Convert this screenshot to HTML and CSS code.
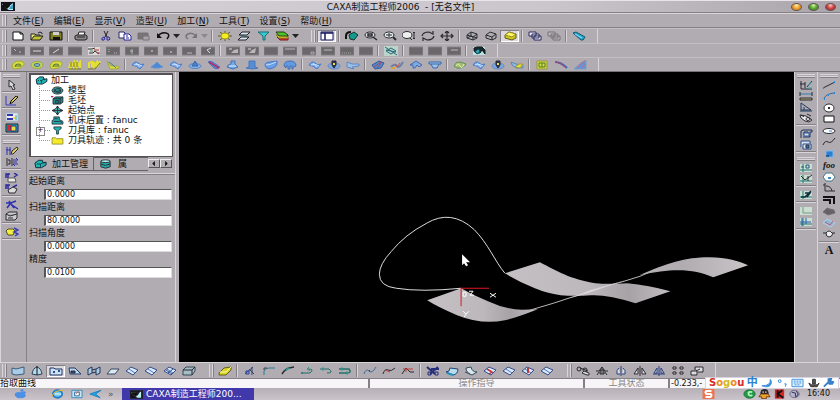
FILE: index.html
```html
<!DOCTYPE html>
<html lang="zh-CN">
<head>
<meta charset="utf-8">
<title>CAXA制造工程师2006</title>
<link rel="stylesheet" href="styles.css">
</head>
<body>
<svg class="defs" aria-hidden="true">
  <symbol id="box" viewBox="0 0 14 10"><path d="M0 1h14v8H0z" fill="#6b686b" stroke="#838083"/></symbol>
  <symbol id="surf" viewBox="0 0 14 10"><path d="M1 5Q4 0 7 3T13 4L9 9Q6 6 1 5z" fill="#76a5e8" stroke="#4a7dca"/><path d="M3 5q4-2 8 1M5 3q2 3 4 4" stroke="#c7e0ff"/></symbol>
  <symbol id="mill" viewBox="0 0 14 10"><path d="M1 6Q2 1 8 1t5 4Q10 9 4 9 1 9 1 6z" fill="#d4dc42" stroke="#a3a83a"/><path d="M4 7q0-3 3-3t3 2M5 6h5" stroke="#59752e"/></symbol>
  <symbol id="sheet" viewBox="0 0 14 10"><path d="M1 5L6 1l7 3-5 5z" fill="#d8e9fb" stroke="#384c83"/><path d="M4 3l6 4" stroke="#4d75ba"/></symbol>
  <symbol id="part" viewBox="0 0 14 10"><path d="M1 4l4-3h4l1 3 3-1v3L8 9H2z" fill="#1fb5b5" stroke="#123"/><path d="M3 5h4v3M7 5l4-2" stroke="#0c4545"/></symbol>
  <symbol id="down" viewBox="0 0 7 10"><path d="M0 3h7L3.500 7z" fill="currentColor" stroke="none"/></symbol>
  <symbol id="axes" viewBox="0 0 14 10"><path d="M1 1h12v8H1z" fill="#c9dfcf" stroke="none"/><path d="M4 1v8M1 7h12" stroke="#247579"/></symbol>
</svg>
<header class="title"><svg class="logo" viewBox="0 0 14 9"><path d="M0 0h14v9H0z" fill="#10131b"/><path d="M1 2h5l1 3 5-4v7H8L6 7z" fill="#b9edf3"/><path d="M2 2h7v2L6 7 2 4z" fill="#111"/><path d="M9 5l3-3v5H8z" fill="#33a3c7"/></svg><h1>CAXA制造工程师2006&nbsp; - [无名文件]</h1>
  <div class="winbtns"><button class="min" aria-label="最小化"></button><button class="max" aria-label="最大化"></button><button class="close" aria-label="关闭"></button></div>
</header>
<nav class="menu"><i class="grip"></i><button>文件(<u>E</u>)</button><button>编辑(<u>E</u>)</button><button>显示(<u>V</u>)</button><button>造型(<u>U</u>)</button><button>加工(<u>N</u>)</button><button>工具(<u>T</u>)</button><button>设置(<u>S</u>)</button><button>帮助(<u>H</u>)</button></nav>

<div class="bar" role="toolbar" aria-label="标准">
  <i class="grip"></i>
  <button aria-label="新建"><svg viewBox="0 0 14 10"><path d="M2 1h7l3 2v6H2z" fill="#fff" stroke="#111"/><path d="M9 1v2h3" stroke="#111"/></svg></button>
  <button aria-label="打开"><svg viewBox="0 0 14 10"><path d="M1 9V3h4l1 1h4v1" fill="#f0ef7b" stroke="#222"/><path d="M1 9l3-4h9l-3 4z" fill="#c4c238" stroke="#222"/><path d="M8 2q2-2 4 0v1" stroke="#222"/></svg></button>
  <button aria-label="保存"><svg viewBox="0 0 14 10"><path d="M1 1h12v8H1z" fill="#828026" stroke="#111"/><path d="M4 1h6v3H4z" fill="#d3cfd1" stroke="none"/><path d="M4 6h7v3H4z" fill="#111" stroke="none"/></svg></button>
  <i class="sep"></i>
  <button aria-label="打印"><svg viewBox="0 0 14 10"><path d="M4 4l1-3h6l-1 3" fill="#fff" stroke="#222"/><path d="M1 5l2-1h9l1 1v3l-2 1H3L1 8z" fill="#8f8a8e" stroke="#222"/><path d="M3 6h8" stroke="#222"/></svg></button>
  <i class="sep"></i>
  <button aria-label="剪切"><svg viewBox="0 0 14 10"><path d="M5 0l3 6M9 0L6 6" stroke="#222"/><path d="M3 7l2-1 1 1-1 2H3zM8 6l2 0 1 2-1 1H8z" stroke="#2b2b9d"/></svg></button>
  <button aria-label="复制"><svg viewBox="0 0 14 10"><path d="M1 1h5l1 1v5H1z" fill="#fff" stroke="#24246e"/><path d="M6 3h5l2 2v4H6z" fill="#fff" stroke="#24249a"/><path d="M8 5h2M8 7h3" stroke="#24249a"/></svg></button>
  <button aria-label="粘贴" disabled><svg viewBox="0 0 14 10"><path d="M1 2h10v6H1z" fill="#777377" stroke="#777377"/><path d="M6 5h6v4H6z" fill="#aaa5aa" stroke="#777377"/></svg></button>
  <button aria-label="撤消"><svg viewBox="0 0 14 10"><path d="M2 5q3-4 8-3t1 6" stroke="#111" stroke-width="1.500"/><path d="M1 2v5h5z" fill="#111" stroke="none"/></svg></button>
  <button class="drop" aria-label="撤消列表"><svg><use href="#down"/></svg></button>
  <button aria-label="重做" disabled><svg viewBox="0 0 14 10"><path d="M12 5Q8 1 4 3T4 8" stroke="#777377" stroke-width="1.500"/><path d="M13 2v5H8z" fill="#777377" stroke="none"/></svg></button>
  <button class="drop off" aria-label="重做列表" disabled><svg><use href="#down"/></svg></button>
  <i class="sep"></i>
  <button aria-label="光源"><svg viewBox="0 0 14 10"><path d="M0 5h14M7 0v10M2 1l10 8M12 1L2 9" stroke="#605a20"/><ellipse cx="7" cy="5" rx="4" ry="3" fill="#f5ed22" stroke="#a59c16"/></svg></button>
  <button aria-label="图层"><svg viewBox="0 0 14 10"><path d="M5 1h8l-3 3H2zM4 6h8l-3 3H1z" fill="#d9e5f0" stroke="#222"/><path d="M3 4l8 2" stroke="#356"/></svg></button>
  <button aria-label="过滤"><svg viewBox="0 0 14 10"><path d="M2 1h11L9 5v4H7V5z" fill="#38cbd0" stroke="#176d77"/></svg></button>
  <button aria-label="颜色"><svg viewBox="0 0 14 10"><path d="M2 6l3 3h8V6z" fill="#d23434" stroke="#7d1d1d"/><path d="M1 4l3 3h9V5z" fill="#e7df31" stroke="#88801c"/><path d="M1 1h8l4 3v1H4z" fill="#4fc22d" stroke="#243d14"/></svg></button>
  <button class="drop" aria-label="颜色列表"><svg><use href="#down"/></svg></button>
  <i class="gap"></i><i class="grip"></i>
  <button class="on" aria-label="特征树"><svg viewBox="0 0 14 10"><path d="M1 1h12v8H1z" fill="#fff" stroke="#171761"/><path d="M1 2h12M5 2v7" stroke="#171761" stroke-width="1.500"/></svg></button>
  <i class="sep"></i>
  <button aria-label="重画"><svg viewBox="0 0 14 10"><path d="M1 5q0-4 5-4M1 5v3" stroke="#111" stroke-width="2"/><path d="M4 4l5-3 4 3-4 5-4-1z" fill="#159b8d" stroke="#15332e"/></svg></button>
  <button aria-label="全屏"><svg viewBox="0 0 14 10"><ellipse cx="6" cy="4" rx="5" ry="3" fill="#dde3e5"/><path d="M4 3h4v2H4zM9 6l4 3" stroke-width="1.500"/></svg></button>
  <button aria-label="放大"><svg viewBox="0 0 14 10"><ellipse cx="6" cy="4" rx="5" ry="3" fill="#e7ecee"/><path d="M3 4h6M6 2v4"/><path d="M10 6l3 3" stroke-width="2"/></svg></button>
  <button aria-label="缩放"><svg viewBox="0 0 14 10"><ellipse cx="5" cy="4" rx="5" ry="3.500" fill="#eee"/><path d="M8 7l2 2M12 1v7M11 2l1-1 1 1M11 7l1 1 1-1"/></svg></button>
  <button aria-label="旋转"><svg viewBox="0 0 14 10"><path d="M1 5q1-4 7-4l4 2V0M13 5q-1 4-7 4L2 7v3" stroke-width="1.200"/></svg></button>
  <button aria-label="平移"><svg viewBox="0 0 14 10"><path d="M1 5h12M7 0v10M3 3L1 5l2 2M11 3l2 2-2 2M5 2l2-2 2 2M5 8l2 2 2-2" stroke-width="1.200"/></svg></button>
  <i class="sep"></i>
  <button aria-label="线架"><svg viewBox="0 0 14 10"><path d="M2 4l4-3 6 2v4L8 9 2 7zM2 4l6 2 4-3M8 6v3M6 1v4L2 7M6 5l6 2"/></svg></button>
  <button aria-label="消隐"><svg viewBox="0 0 14 10"><path d="M2 4l4-3 6 2v4L8 9 2 7zM2 4l6 2 4-3M8 6v3"/></svg></button>
  <button class="on" aria-label="真实感"><svg viewBox="0 0 14 10"><path d="M2 4l4-3 7 2v4L9 9 2 7z" fill="#d5c81c" stroke="#5d5a16"/><path d="M2 4l4-3 7 2-4 3z" fill="#fbf66a" stroke="#938c22"/></svg></button>
  <i class="sep"></i>
  <button aria-label="层叠窗口"><svg viewBox="0 0 14 10"><path d="M1 1h7v4H1zM4 3h7v4H4zM6 5h7v4H6z" fill="#eee" stroke="#292962"/></svg></button>
  <button aria-label="平铺窗口" disabled><svg viewBox="0 0 14 10"><path d="M1 1h7v4H1zM4 3h7v4H4zM6 5h7v4H6z" fill="#bbb6bb" stroke="#777377"/></svg></button>
  <i class="sep"></i>
  <button aria-label="帮助"><svg viewBox="0 0 14 10"><path d="M1 2l3-1 9 5-2 3-2 0z" fill="#24a9cf" stroke="#17546d"/><path d="M3 3l7 4" stroke="#9de1ef"/></svg></button>
  <i class="end"></i>
</div>

<div class="bar" role="toolbar" aria-label="特征">
  <i class="grip"></i>
  <button aria-label="点" disabled><svg viewBox="0 0 14 10"><use href="#box"/><path d="M3 3l2 2M8 6h2" stroke="#bbb"/></svg></button>
  <button aria-label="直线" disabled><svg viewBox="0 0 14 10"><use href="#box"/><path d="M3 5h8" stroke="#ddd"/></svg></button>
  <button aria-label="斜线" disabled><svg viewBox="0 0 14 10"><use href="#box"/><path d="M4 7l6-4" stroke="#ddd"/></svg></button>
  <button aria-label="平面" disabled><svg viewBox="0 0 14 10"><use href="#box"/></svg></button>
  <button aria-label="测量"><svg viewBox="0 0 14 10"><path d="M1 1h12v8H1z" fill="#ded9d9" stroke="none"/><path d="M1 3h4l3-1M2 7h4l2-2 4 3" stroke="#333"/><path d="M7 4h5M10 7h3" stroke="#bb3232"/><path d="M3 5h3" stroke="#40916d"/></svg></button>
  <button aria-label="拉伸" disabled><svg viewBox="0 0 14 10"><use href="#box"/><path d="M3 3v4M8 7h3" stroke="#bbb" stroke-dasharray="1"/></svg></button>
  <button aria-label="旋转增料" disabled><svg viewBox="0 0 14 10"><use href="#box"/><path d="M7 3v5M5 5h3" stroke="#bbb"/></svg></button>
  <button aria-label="放样" disabled><svg viewBox="0 0 14 10"><use href="#box"/><path d="M7 5h2" stroke="#ddd"/></svg></button>
  <button aria-label="导动" disabled><svg viewBox="0 0 14 10"><use href="#box"/><path d="M7 6h2" stroke="#ddd"/></svg></button>
  <button aria-label="加厚" disabled><svg viewBox="0 0 14 10"><use href="#box"/><path d="M5 7h5" stroke="#bbb"/></svg></button>
  <button aria-label="裁剪" disabled><svg viewBox="0 0 14 10"><use href="#box"/><path d="M10 2L6 4l3 3" stroke="#ddd"/></svg></button>
  <i class="sep"></i>
  <button aria-label="过渡" disabled><svg viewBox="0 0 14 10"><use href="#box"/><path d="M5 7l3-3 4-1v4z" fill="#bab6b9" stroke="none"/><path d="M3 3h3" stroke="#ddd"/></svg></button>
  <button aria-label="倒角" disabled><svg viewBox="0 0 14 10"><use href="#box"/><path d="M4 7l3-3 4-2-1 5z" fill="#bab6b9" stroke="none"/><path d="M3 3h3" stroke="#ddd"/></svg></button>
  <button aria-label="抽壳" disabled><svg viewBox="0 0 14 10"><use href="#box"/></svg></button>
  <button aria-label="拔模" disabled><svg viewBox="0 0 14 10"><use href="#box"/><path d="M2 3h10" stroke="#bbb"/></svg></button>
  <button aria-label="筋板" disabled><svg viewBox="0 0 14 10"><use href="#box"/><path d="M9 6h3v2H9z" stroke="#aaa"/></svg></button>
  <button aria-label="打孔" disabled><svg viewBox="0 0 14 10"><use href="#box"/><path d="M3 4h8" stroke="#bbb"/></svg></button>
  <button aria-label="阵列" disabled><svg viewBox="0 0 14 10"><use href="#box"/><path d="M2 7h10" stroke="#aaa" stroke-dasharray="1"/></svg></button>
  <button aria-label="环形阵列" disabled><svg viewBox="0 0 14 10"><use href="#box"/></svg></button>
  <i class="sep"></i>
  <button aria-label="基准面"><svg viewBox="0 0 14 10"><path d="M0 0h14v10H0z" fill="#bdd4ca" stroke="none"/><path d="M2 5l5-3 5 3-5 3zM1 1l12 8M2 4l10 2" stroke="#276d78"/></svg></button>
  <i class="sep"></i>
  <button aria-label="缩放实体" disabled><svg viewBox="0 0 14 10"><use href="#box"/></svg></button>
  <button aria-label="型腔" disabled><svg viewBox="0 0 14 10"><use href="#box"/></svg></button>
  <button aria-label="分模" disabled><svg viewBox="0 0 14 10"><use href="#box"/><path d="M4 4h7" stroke="#bbb"/></svg></button>
  <i class="sep"></i>
  <button aria-label="实体布尔"><svg viewBox="0 0 14 10"><path d="M1 1h12v8H1z" fill="#b9e2e4" stroke="none"/><path d="M2 2l3-1h5l3 3v4l-3-4-2 3H4L2 5z" fill="#17272e" stroke="#122"/><path d="M3 5l4-2 1 3-3 2z" fill="#35aeb5" stroke="#145"/></svg></button>
  <i class="end"></i>
</div>

<div class="bar" role="toolbar" aria-label="加工">
  <i class="grip"></i>
  <button aria-label="平面区域粗加工"><svg><use href="#mill"/></svg></button>
  <button aria-label="区域粗加工"><svg viewBox="0 0 14 10"><ellipse cx="7" cy="5" rx="6" ry="3.500" fill="#c8d553" stroke="#9aa94e"/><ellipse cx="7" cy="5" rx="3" ry="1.500" fill="#82b8c1" stroke="#457789"/></svg></button>
  <button aria-label="等高线粗加工"><svg><use href="#mill"/></svg></button>
  <button aria-label="扫描线粗加工"><svg viewBox="0 0 14 10"><path d="M1 8l2-6v5l3-5v5l3-5v5l3-5v6" stroke="#e4df31" stroke-width="2"/><path d="M1 9h12M3 2v5M6 2v5M9 2v5" stroke="#777a26"/></svg></button>
  <button aria-label="摆线式粗加工"><svg viewBox="0 0 14 10"><path d="M2 8V3l3-1v5l2-5v5l3-5v5l3-6" stroke="#e4df31" stroke-width="2"/><path d="M1 9h7l5-6" stroke="#777a26"/></svg></button>
  <button aria-label="插铣粗加工"><svg viewBox="0 0 14 10"><path d="M1 1l4 5h7l1 2-3 1H4z" fill="#dce044" stroke="#a3a83a"/><path d="M3 2l4 3 3 3" stroke="#43828d"/></svg></button>
  <i class="sep"></i>
  <button aria-label="参数线精加工"><svg><use href="#surf"/></svg></button>
  <button aria-label="等高线精加工"><svg viewBox="0 0 14 10"><path d="M1 7l3-2 3-3 3 3 3 2-4 1H4z" fill="#4b8ad9" stroke="#6492cd"/></svg></button>
  <button aria-label="扫描线精加工"><svg><use href="#surf"/></svg></button>
  <button aria-label="浅平面精加工"><svg viewBox="0 0 14 10"><ellipse cx="7" cy="6" rx="6" ry="2.500" fill="#87b2e4" stroke="#5484c9"/><path d="M4 6l3-5 3 5z" fill="#4d83cc" stroke="#3464a9"/></svg></button>
  <button aria-label="限制线精加工"><svg viewBox="0 0 14 10"><path d="M1 2q3-2 6 1l6 4q-3 3-6 1z" fill="#5489d6" stroke="#5075c0"/><path d="M2 2l10 6" stroke="#b62b69" stroke-width="1.500"/></svg></button>
  <button aria-label="导动线精加工"><svg viewBox="0 0 14 10"><path d="M1 7q1-3 4-3V1h4v3l3 3-5 2z" fill="#74a8e2" stroke="#4670ba"/><path d="M3 6h7" stroke="#e0efff"/></svg></button>
  <button aria-label="轮廓线精加工"><svg viewBox="0 0 14 10"><path d="M4 7V1h6v6l3 1-5 1-7-1z" fill="#538ed6" stroke="#4c76b7"/></svg></button>
  <button aria-label="三维偏置"><svg viewBox="0 0 14 10"><path d="M1 5q0-3 5-3l7-1v3q-1 4-8 5-4-1-4-4z" fill="#6b9fe3" stroke="#4777ca"/><path d="M2 5q4 0 10-3" stroke="#c7e0ff"/></svg></button>
  <button aria-label="深腔侧壁"><svg viewBox="0 0 14 10"><path d="M1 6q0-5 6-5t6 5l-3 1v2H9V6H7v3H5V6H3v2z" fill="#6299df" stroke="#4271bb"/></svg></button>
  <i class="sep"></i>
  <button aria-label="等高线补加工"><svg><use href="#surf"/></svg></button>
  <button aria-label="笔式清根"><svg viewBox="0 0 14 10"><ellipse cx="7" cy="6" rx="6" ry="3" fill="#7ba6df" stroke="#6689ba"/><path d="M5 1h4v4L7 8 5 5z" fill="#293653"/><path d="M6 3h2v2H6z" fill="#f0df3b" stroke="none"/></svg></button>
  <button aria-label="区域补加工"><svg viewBox="0 0 14 10"><path d="M1 2l5 2 7 0v2L6 7l2 2-7-2z" fill="#9ac2e9" stroke="#6187c5"/></svg></button>
  <i class="sep"></i>
  <button aria-label="曲面区域加工"><svg viewBox="0 0 14 10"><path d="M1 5l7-4 5 2-3 5-6 1z" fill="#5289ce" stroke="#315ca0"/><path d="M3 7l7-5M6 8l5-6" stroke="#a6485c"/></svg></button>
  <button aria-label="曲线加工"><svg viewBox="0 0 14 10"><path d="M1 7q4-4 6-1t6-4" stroke="#6583ad" stroke-width="2"/><path d="M5 4l2 3 3-4" stroke="#df4937"/><path d="M1 8h4" stroke="#e1a035" stroke-width="2"/></svg></button>
  <button aria-label="曲面轮廓"><svg viewBox="0 0 14 10"><path d="M1 5l6-4 6 4-3 2-2-2-2 3H4V5z" fill="#7eaade" stroke="#4269b3"/></svg></button>
  <button aria-label="投影加工"><svg viewBox="0 0 14 10"><path d="M1 2h12v2H1zM3 4l2 4h4l2-4" fill="#9fc2e7" stroke="#3768ac"/></svg></button>
  <i class="sep"></i>
  <button aria-label="孔加工"><svg viewBox="0 0 14 10"><path d="M1 6Q3 1 7 2t6 2Q10 9 4 8z" fill="#a0bb7a" stroke="#639255"/><path d="M3 6q2-4 4 0t4-2" stroke="#edf1a0"/></svg></button>
  <button aria-label="轨迹编辑"><svg><use href="#surf"/></svg></button>
  <button aria-label="刀位裁剪"><svg viewBox="0 0 14 10"><ellipse cx="7" cy="6" rx="6" ry="3" fill="#7ba6df" stroke="#6689ba"/><path d="M5 1h4v4L7 8 5 5z" fill="#293653"/><path d="M6 3h2v2H6z" fill="#f0df3b" stroke="none"/></svg></button>
  <button aria-label="轨迹连接"><svg viewBox="0 0 14 10"><path d="M1 2l5 2 7 1v3L6 8 2 5z" fill="#8ebae8" stroke="#5f87af"/><path d="M5 7l4-3h4l-3 4z" fill="#e4df43" stroke="#a09731"/></svg></button>
  <i class="sep"></i>
  <button aria-label="仿真"><svg viewBox="0 0 14 10"><path d="M2 1h10v8H2z" fill="#d6d74c" stroke="#9c972e"/><path d="M4 3h6v4H4zM7 3v4" stroke="#4c801e"/></svg></button>
  <button aria-label="后置"><svg viewBox="0 0 14 10"><path d="M1 2q6 0 12 6" stroke="#3e6bb5" stroke-width="2"/><path d="M2 2q5 1 9 5" stroke="#c53762"/></svg></button>
  <button aria-label="工艺清单"><svg viewBox="0 0 14 10"><path d="M1 9L8 3l5-3v9z" fill="#5d96dc" stroke="#7b9dc4"/><path d="M4 9q1-5 8-8M8 9q0-3 5-4" stroke="#c96c7c"/></svg></button>
  <i class="end"></i>
</div>

<main>
  <div class="strip" role="toolbar" aria-label="几何编辑">
    <i class="hgrip"></i>
    <button aria-label="选择"><svg viewBox="0 0 14 10"><path d="M4 0l6 5H8l2 4-2 1-2-4-2 1z" fill="#ddd"/></svg></button>
    <i class="hsep"></i>
    <button aria-label="草图"><svg viewBox="0 0 14 10"><path d="M1 0v9h10" stroke="#3a3ac0"/><path d="M5 8l1-3 5-5 2 1-5 5z" fill="#e0cc58" stroke="#111"/></svg></button>
    <i class="hsep"></i>
    <button aria-label="层设置"><svg viewBox="0 0 14 10"><path d="M1 1h12v8H1z" fill="#eee" stroke="#9fb7c8"/><path d="M2 3h6M2 7h6" stroke="#3434b6" stroke-width="2"/><path d="M8 5h2v2H8z" fill="#e6e047" stroke="none"/><path d="M11 3v5" stroke="#239eb6"/></svg></button>
    <button aria-label="元素颜色"><svg viewBox="0 0 14 10"><path d="M1 1h12v8H1z" fill="#25aeb5" stroke="#223"/><path d="M2 2h4v6H2z" fill="#cb2d2d" stroke="none"/><path d="M6 3h5v5H6z" fill="#e6df3e" stroke="#2929a0"/></svg></button>
    <i class="hsep"></i><i class="hgrip"></i>
    <button aria-label="修改"><svg viewBox="0 0 14 10"><path d="M2 1v8M5 1v8M1 4h5" stroke="#3030ad"/><path d="M6 8l1-3 5-4 1 2-5 5z" fill="#e1d466"/></svg></button>
    <button aria-label="替换"><svg viewBox="0 0 14 10"><path d="M2 1v8M7 1v8M3 3h2v4H3" /><path d="M8 3h5L11 1M13 7H8l2 2M8 5h4" stroke="#3030ad"/></svg></button>
    <i class="hsep"></i>
    <button aria-label="移动"><svg viewBox="0 0 14 10"><path d="M1 5V1h4M3 1v4M9 0l3 2-3 2" stroke="#2929a0" stroke-width="1.500"/><path d="M3 5h7l1 4H3z" fill="#eee" stroke="#555"/></svg></button>
    <button aria-label="旋转对象"><svg viewBox="0 0 14 10"><path d="M1 5V1h4M3 1v4M8 3l4-2" stroke="#2929a0" stroke-width="1.500"/><path d="M3 6l5-3 4 2-2 4H4z" fill="#ddd"/></svg></button>
    <i class="hsep"></i>
    <button aria-label="修剪"><svg viewBox="0 0 14 10"><path d="M1 3h5l5-2M4 1l5 7M2 8l3-4M7 5l6 4" stroke="#2e2eb1" stroke-width="1.500"/></svg></button>
    <button aria-label="打断"><svg viewBox="0 0 14 10"><path d="M1 3l3-2h8v6l-2 2H1zM1 3l4 2 7-2M3 7h5" fill="#ccc"/></svg></button>
    <i class="hsep"></i>
    <button aria-label="查询"><svg viewBox="0 0 14 10"><path d="M1 4l2-2h5l2 2-2 4H3z" fill="#f0ed3c" stroke="#525023"/><path d="M9 1l4 2-4 2 4 2-3 2" stroke="#3b3bb8" stroke-width="1.500"/></svg></button>
    <i class="hsep"></i>
  </div>

  <aside>
    <ul class="tree">
      <li class="root"><svg><use href="#part"/></svg>加工</li>
      <li><svg viewBox="0 0 14 10"><ellipse cx="7" cy="5" rx="6" ry="4" fill="#299e9e"/><path d="M3 6l3-3h4v4H6zM3 3l3 3 5-1"/></svg>模型</li>
      <li><svg viewBox="0 0 14 10"><path d="M2 3l3-2h8v6l-3 2H2z" fill="#168c8c"/><path d="M2 3h8v6M10 3l3-2M5 5h3v3H5z"/><path d="M0 0h2v1H0z" fill="#c33" stroke="#a28"/></svg>毛坯</li>
      <li><svg viewBox="0 0 14 10"><path d="M1 5l4-2 2-3 2 3 4 2-4 2-2 3-2-3z" fill="#44b6b6"/><path d="M1 5h12M7 0v10"/></svg>起始点</li>
      <li><svg viewBox="0 0 14 10"><path d="M1 8V5l2-1V1h6v3l4 2v3H1z" fill="#22aeb0"/><path d="M3 6h6l3 1M4 3h3"/></svg>机床后置 : fanuc</li>
      <li class="more"><svg viewBox="0 0 14 10"><path d="M3 1h8v2L8 5v4H6V5L3 3z" fill="#2ab1b1" stroke="#173f43"/></svg>刀具库 : fanuc</li>
      <li><svg viewBox="0 0 14 10"><path d="M1 2h4l1 1h7v6H1z" fill="#f4ec29" stroke="#97902f"/></svg>刀具轨迹 : 共 0 条</li>
    </ul>
    <div class="tabs"><button class="tab cur"><svg><use href="#part"/></svg>加工管理</button><button class="tab"><svg viewBox="0 0 14 10"><path d="M2 2v6q5 3 10 0V2" fill="#28aaaa"/><ellipse cx="7" cy="2" rx="5" ry="1.500" fill="#aee"/><path d="M2 5q5 3 10 0"/></svg>属</button><span class="scroll"><button aria-label="向左"><svg viewBox="0 0 10 8"><path d="M6 1v6L3 4z" fill="#111" stroke="none"/></svg></button><button aria-label="向右"><svg viewBox="0 0 10 8"><path d="M4 1v6l3-3z" fill="#111" stroke="none"/></svg></button></span></div>
    <form class="props">
      <label for="p1">起始距离</label><input id="p1" value="0.0000">
      <label for="p2">扫描距离</label><input id="p2" value="80.0000">
      <label for="p3">扫描角度</label><input id="p3" value="0.0000">
      <label for="p4">精度</label><input id="p4" value="0.0100">
    </form>
  </aside>

  <section class="view">
    <svg viewBox="180 72 613 291" role="img" aria-label="三维模型">
      <defs>
        <linearGradient id="g1" x1="0" x2="1"><stop offset="0" stop-color="#c4c0c4"/><stop offset=".5" stop-color="#bcb8bc"/><stop offset=".75" stop-color="#a6a2a6"/><stop offset="1" stop-color="#c0bcc0"/></linearGradient>
        <linearGradient id="g2" x1="0" x2="1"><stop offset="0" stop-color="#b5b1b5"/><stop offset=".4" stop-color="#b0acb0"/><stop offset="1" stop-color="#c8c4c8"/></linearGradient>
      </defs>
      <path d="M505 274L540 263C558 272 570 280 596 284Q607 285 628 284 649 286 671 292L636 304Q608 295 591 296 575 297 561 296 547 294 535 289 518 282 505 274z" fill="url(#g1)"/>
      <path d="M427 301L461 289Q475 297 488 302 505 310 522 310.500L538 310Q515 319 505 321 482 326 457 316 438 308 427 301z" fill="url(#g1)"/>
      <path d="M530 311Q555 304 575 297T618 284 662 268" stroke="#bbb7bb"/>
      <path d="M570 299L590 291 615 284 626 281 605 288 588 294z" fill="#d8d4d8"/>
      <path d="M640 276C668 264 685 258 710 258 728 258 740 262 749 266L714 278C695 270 675 268 640 276z" fill="url(#g2)"/>
      <path d="M505 274C495 262 488 244 474 230Q451 209 426 224 405 235 391 252 379 265 379 275 379 287 396 289 421 293 461 289" stroke="#dcdcdc"/>
      <path d="M461 289h28M461 289v18" stroke="#df1620"/>
      <path d="M463 293h3v4h-3zM469 292h4l-3 4h4M490 294l6 4M496 294l-6 4M463 312l3 3 3-3M466 315l-2 3" stroke="#fff"/>
      <path d="M462 255v11l2-2 2 3 2-1-2-3h4z" fill="#fff"/>
    </svg>
  </section>

  <div class="strip" role="toolbar" aria-label="标注">
    <i class="hgrip"></i>
    <button aria-label="坐标系"><svg viewBox="0 0 14 10"><path d="M2 1v8h11M1 4h5M6 2v6M8 7l5-6"/><path d="M8 6l5-4M9 8h4" stroke="#3ab"/></svg></button>
    <button aria-label="尺寸"><svg viewBox="0 0 14 10"><path d="M1 3h12" stroke="#3578ad"/><path d="M1 1v4M13 1v4M1 7h12v2H1z" fill="#b6b077"/></svg></button>
    <button aria-label="角度"><svg viewBox="0 0 14 10"><path d="M2 1l10 7H2zM1 9h12M5 5v3" stroke="#1f3a5c"/></svg></button>
    <button aria-label="尺寸驱动"><svg viewBox="0 0 14 10"><path d="M1 2l6 1 6 4-3 2-4-1-4-3z" fill="#eee"/><ellipse cx="9" cy="6" rx="2" ry="1.500"/><path d="M2 2l3 2M8 1l4 2"/></svg></button>
    <i class="hsep"></i>
    <button aria-label="草图环"><svg viewBox="0 0 14 10"><path d="M2 9V2l2-1h9v2h-2v5H4M5 3h4v3H5z" stroke="#1c335c"/><path d="M5 4h5v3H5z" fill="#ddd" stroke="#2b58a0"/></svg></button>
    <button aria-label="草图移动"><svg viewBox="0 0 14 10"><path d="M2 7V1h9v2M4 9V4h8v5z" fill="#dbe5ef" stroke="#244b8c"/><path d="M7 5h3v3H7z" fill="#367bc4"/></svg></button>
    <i class="hsep"></i><i class="hgrip"></i>
    <button aria-label="坐标原点"><svg viewBox="0 0 14 10"><use href="#axes"/><path d="M7 2h3v3H7zM2 4h3" stroke="#25567b"/></svg></button>
    <button aria-label="坐标平面"><svg viewBox="0 0 14 10"><use href="#axes"/><path d="M2 2l4 4 7-5M9 2v5"/></svg></button>
    <i class="hsep"></i>
    <button aria-label="激活坐标"><svg viewBox="0 0 14 10"><use href="#axes"/><path d="M2 7h4l6-6M6 3h5L8 7" stroke="#12303f" stroke-width="1.500"/></svg></button>
    <i class="hsep"></i>
    <button aria-label="隐藏坐标"><svg viewBox="0 0 14 10"><path d="M1 1h12v8H1z" fill="#c9dfcf" stroke="none"/><path d="M4 1v6h9" stroke="#7d9588"/></svg></button>
    <button aria-label="显示坐标"><svg viewBox="0 0 14 10"><use href="#axes"/><path d="M3 1v8M7 1v6M1 5h11" stroke="#2b5cae"/></svg></button>
    <i class="hsep"></i>
  </div>
  <div class="strip curves" role="toolbar" aria-label="曲线">
    <i class="hgrip"></i>
    <div class="stack">
    <button aria-label="直线"><svg viewBox="0 0 14 10"><path d="M1 8l12-6"/><path d="M1 8h1M12 2h1" stroke="#28d" stroke-width="2"/></svg></button>
    <button aria-label="圆弧"><svg viewBox="0 0 14 10"><path d="M2 8q1-5 10-6" stroke="#42668c"/><path d="M2 8h1M6 4h1M12 2h1" stroke="#28d" stroke-width="2"/></svg></button>
    <button aria-label="圆"><svg viewBox="0 0 14 10"><ellipse cx="7" cy="5" rx="5" ry="4" fill="#fff"/><path d="M6 5h2" stroke-width="2"/></svg></button>
    <button aria-label="矩形"><svg viewBox="0 0 14 10"><path d="M2 2h10v6H2z" fill="#fff" stroke="#111"/></svg></button>
    <button aria-label="椭圆"><svg viewBox="0 0 14 10"><ellipse cx="7" cy="5" rx="6" ry="2.500" fill="#fff"/><path d="M7 5h3" stroke="#28d"/></svg></button>
    <button aria-label="样条"><svg viewBox="0 0 14 10"><path d="M1 8q2-5 5-3t7-4"/></svg></button>
    <button aria-label="点"><svg viewBox="0 0 14 10"><path d="M4 2h7v6H4z" fill="#2b80d4" stroke="#79b8eb"/><path d="M4 7h3" stroke="#124"/></svg></button>
    <button class="foo" aria-label="公式曲线">foo</button>
    <button aria-label="多边形"><svg viewBox="0 0 14 10"><path d="M4 1h6l3 4-3 4H4L1 5z" fill="#fff" stroke="#478"/><path d="M6 5h3v2H6z" fill="#48b" stroke="none"/></svg></button>
    <button aria-label="二次曲线"><svg viewBox="0 0 14 10"><path d="M3 0v8h10M1 2h2M4 3q5 0 6 5"/></svg></button>
    <button aria-label="等距线"><svg viewBox="0 0 14 10"><path d="M1 2h11v7M1 5h7v4" stroke="#111" stroke-width="2"/></svg></button>
    <button aria-label="曲线投影"><svg viewBox="0 0 14 10"><path d="M1 6l4-4 3 1 4 1 1 3-7 2z" fill="#656166" stroke="#757176"/></svg></button>
    <button aria-label="相关线"><svg viewBox="0 0 14 10"><path d="M1 5l4-4 8 4-4 4z" fill="#8fb7d6" stroke="#b3cde0"/><path d="M3 4l5 3 3-4" stroke="#bd5c7c"/></svg></button>
    <button aria-label="样条转圆弧"><svg viewBox="0 0 14 10"><path d="M1 4h3q3-4 6 0h3M4 4q0 4 3 4t4-4" fill="#eee"/></svg></button>
    </div>
    <i class="hsep"></i>
    <button class="letter" aria-label="文字">A</button>
  </div>
</main>

<div class="bar bottom" role="toolbar" aria-label="曲面">
  <i class="grip"></i>
  <button aria-label="直纹面"><svg viewBox="0 0 14 10"><path d="M1 2l4 1 8-2v7l-8 1-4-1z" fill="#a9cde5" stroke="#3a5d7c"/></svg></button>
  <button aria-label="旋转面"><svg viewBox="0 0 14 10"><path d="M2 8q1-6 5-7 4 1 5 7-5 2-10 0z" fill="#b9d9e9" stroke="#26415e"/><path d="M7 0v9" stroke="#111"/></svg></button>
  <button class="on" aria-label="扫描面"><svg viewBox="0 0 14 10"><path d="M1 2h4l1 1h7v6H1z" fill="#cce3f4" stroke="#1e3267"/><path d="M4 5h2v2H4zM9 4h2v2H9z" fill="#2a4f93" stroke="none"/></svg></button>
  <button aria-label="导动面"><svg viewBox="0 0 14 10"><path d="M1 2h6l6 6H2z" fill="#bdd8ec" stroke="#22396c"/><path d="M3 5h4v2H3z" fill="#33539d"/></svg></button>
  <button aria-label="等距面"><svg viewBox="0 0 14 10"><path d="M1 3l4-2v6L1 9zM5 4l4-1M9 3l4-2v6L9 9zM5 7l4-1" fill="#adcbe2" stroke="#20365c"/></svg></button>
  <button aria-label="平面"><svg viewBox="0 0 14 10"><path d="M1 8l4-5h8L9 8z" fill="#dce8f2" stroke="#354762"/></svg></button>
  <button aria-label="边界面"><svg><use href="#sheet"/></svg></button>
  <button aria-label="放样面"><svg><use href="#sheet"/></svg></button>
  <button aria-label="网格面"><svg viewBox="0 0 14 10"><use href="#sheet"/><path d="M5 7l5-4M3 4l6 4" stroke="#304e95"/></svg></button>
  <button aria-label="实体表面"><svg viewBox="0 0 14 10"><path d="M1 4l3-3h9v4l-3 4H1z" fill="#a6bec6" stroke="#334955"/><path d="M1 4h9v5M10 4l3-3"/></svg></button>
  <i class="gap"></i><i class="grip"></i>
  <button aria-label="删除"><svg viewBox="0 0 14 10"><path d="M1 7l5-5 7-1v3L8 9H1z" fill="#d9d42c" stroke="#605e1b"/><path d="M2 6h6l5-5" stroke="#fffaa0"/></svg></button>
  <i class="sep"></i>
  <button aria-label="曲线裁剪"><svg viewBox="0 0 14 10"><path d="M2 8l8-7M6 3l5 5M9 1v8" stroke="#32436c"/><path d="M3 5h3v3H3z" stroke="#263c9b"/></svg></button>
  <button aria-label="曲线过渡"><svg viewBox="0 0 14 10"><path d="M2 9V5q1-3 5-3h6" stroke="#247a96"/><path d="M2 4V2h3" stroke="#444"/></svg></button>
  <button aria-label="曲线打断"><svg viewBox="0 0 14 10"><path d="M1 8q3-5 7-6M8 2l5-1" stroke-width="1.500"/><path d="M5 4l3-2" stroke="#269d99" stroke-width="2"/></svg></button>
  <button aria-label="曲线组合"><svg viewBox="0 0 14 10"><path d="M1 7h9q5-4-2-4M1 7h2" stroke="#276d69"/><path d="M9 1L7 3l3 2" stroke="#239e98"/></svg></button>
  <button aria-label="曲线拉伸"><svg viewBox="0 0 14 10"><path d="M1 3h9q5 4-2 4" stroke="#276d69"/><path d="M4 1v4" stroke="#239e98"/></svg></button>
  <button aria-label="曲线优化"><svg viewBox="0 0 14 10"><path d="M1 3h10q3 4-2 4H1" stroke="#276d69" stroke-width="1.500"/><path d="M4 1v4M9 5v4" stroke="#239e98"/></svg></button>
  <i class="sep"></i>
  <button aria-label="样条型值点"><svg viewBox="0 0 14 10"><path d="M1 8q2-6 5-3t7-4" stroke="#3e6d9d"/><path d="M6 5h1" stroke="#25a" stroke-width="2"/></svg></button>
  <button aria-label="样条控制点"><svg viewBox="0 0 14 10"><path d="M1 8q2-6 5-4t7-2" /><path d="M3 4l5 2" stroke="#cc3b36"/></svg></button>
  <button aria-label="样条端点切矢"><svg viewBox="0 0 14 10"><path d="M1 8l4-6 4 4h4"/><path d="M2 3h10M5 3v3" stroke="#c83835"/></svg></button>
  <i class="sep"></i>
  <button aria-label="曲面裁剪"><svg viewBox="0 0 14 10"><path d="M1 1l8 7M12 1L4 8M5 3h8" stroke="#242c7b" stroke-width="2"/><path d="M9 6h3v3H9zM2 6h3v3H2z" stroke="#242c7b"/></svg></button>
  <button aria-label="曲面过渡"><svg viewBox="0 0 14 10"><path d="M1 6q4 0 4-4l8 1q0 5-5 6z" fill="#badcf0" stroke="#25456f"/><path d="M2 7l6 2" stroke="#2590bf" stroke-width="2"/></svg></button>
  <button aria-label="曲面缝合"><svg viewBox="0 0 14 10"><path d="M2 2q0 5 6 7l5-3Q8 6 7 1zM1 6l5 2" fill="#d9e6ee" stroke="#304d5b"/></svg></button>
  <button aria-label="曲面拼接"><svg viewBox="0 0 14 10"><use href="#sheet"/><path d="M4 3l5 3-3 2" stroke="#c1343b" stroke-width="1.500"/></svg></button>
  <button aria-label="曲面延伸"><svg><use href="#sheet"/></svg></button>
  <button aria-label="曲面优化"><svg viewBox="0 0 14 10"><use href="#sheet"/><path d="M7 2v5" stroke="#c1343b" stroke-width="2"/></svg></button>
  <button aria-label="曲面重拟合"><svg><use href="#sheet"/></svg></button>
  <i class="gap"></i><i class="grip"></i>
  <button aria-label="平移"><svg viewBox="0 0 14 10"><ellipse cx="3" cy="3" rx="2" ry="2"/><ellipse cx="9" cy="4" rx="2" ry="2"/><path d="M4 2l8 3M6 7l5 2h2V7L8 5z" fill="#ddd"/></svg></button>
  <button aria-label="平面旋转"><svg viewBox="0 0 14 10"><path d="M1 5h3l3-4 3 4h3M4 6l-2 3M10 6l2 3M5 4h4v4H5z" fill="#777"/></svg></button>
  <button aria-label="旋转"><svg viewBox="0 0 14 10"><path d="M7 0v10M5 2Q2 4 3 8h3M9 2q3 2 2 6H8" fill="#ddd" stroke="#263e7c"/></svg></button>
  <button aria-label="平面镜像"><svg viewBox="0 0 14 10"><path d="M5 2v6H1zM9 2v6h4zM7 0v10" fill="#ddd"/></svg></button>
  <button aria-label="镜像"><svg viewBox="0 0 14 10"><path d="M5 2v5H2zM9 2v5h3zM7 0v10M1 8h12" fill="#ddd" stroke="#263e7c"/></svg></button>
  <button aria-label="阵列"><svg viewBox="0 0 14 10"><path d="M2 1h3v2H2zM9 1h3v2H9zM2 6h3v2H2zM9 6h3v2H9z" fill="#ddd" stroke="#222"/></svg></button>
  <button aria-label="缩放"><svg viewBox="0 0 14 10"><path d="M5 1h8v5H8M1 5h6v4H1zM5 1v3M6 5l4-2" fill="#ddd"/></svg></button>
  <i class="end"></i>
</div>
<div class="status"><span class="s1">拾取曲线</span><span class="s2">操作指导</span><span class="s3">工具状态</span><span class="s4">-0.233,-</span></div>
<footer class="task">
  <button class="apple" aria-label="开始"><svg viewBox="0 0 14 10"><path d="M7 3q4-2 6 0-2 2 0 4-3 4-6 2-3 2-6-2-1-5 6-4z" fill="#4c8fe5" stroke="none"/><path d="M7 2l3-2" stroke="#4c8fe5" stroke-width="2"/></svg></button>
  <div class="quick"><button aria-label="浏览器"><svg viewBox="0 0 14 10"><ellipse cx="7" cy="5" rx="5" ry="4" fill="#70c5ea" stroke="#247cc4" stroke-width="2"/><path d="M4 5h7" stroke="#fff"/><path d="M1 8Q2 1 13 1" stroke="#e6b62a"/></svg></button><button aria-label="显示桌面"><svg viewBox="0 0 14 10"><path d="M2 1h11v8H2z" fill="#cbe4ef" stroke="#3589bd"/><path d="M5 3h5v4H5z" fill="#fff" stroke="#25679e"/><path d="M6 5l4-3" stroke="#d46b39"/></svg></button><button aria-label="下载工具"><svg viewBox="0 0 14 10"><path d="M1 5l12-4-6 4 5 4z" fill="#22a7e5" stroke="#1781c3"/></svg></button><span class="chev">»</span></div>
  <button class="app"><svg viewBox="0 0 14 9"><path d="M0 0h14v9H0z" fill="#10131b"/><path d="M1 2h5l1 3 5-4v7H8L6 7z" fill="#b9edf3" stroke="none"/><path d="M2 2h7v2L6 7 2 4z" fill="#111"/></svg>CAXA制造工程师200...</button>
  <div class="tray"><svg class="sg" viewBox="0 0 12 10"><path d="M0 0h12v10H0z" fill="#ed7650"/><path d="M9 2H4Q2 3 4 5h4q2 1 0 3H3" stroke="#fff" stroke-width="2" fill="none"/></svg>
    <svg viewBox="0 0 14 10"><ellipse cx="7" cy="5" rx="6" ry="4.500" fill="#24994a" stroke="#1b7337"/><path d="M10 3q-5-1-4 2t4 1" stroke="#b3f4b9" stroke-width="2"/></svg>
    <svg viewBox="0 0 14 10"><ellipse cx="7" cy="4" rx="4" ry="4" fill="#222"/><path d="M3 5h8l2 3H9v2H4V8H1z" fill="#e9a727" stroke="#79361a"/><path d="M5 3h1M8 3h1" stroke="#fff" stroke-width="2"/></svg>
    <svg viewBox="0 0 14 10"><path d="M2 0h10v10H2z" fill="#d82525" stroke="none"/><path d="M5 1v8M10 1L5 5l6 4" stroke="#111" stroke-width="2"/></svg>
    <svg viewBox="0 0 14 10"><ellipse cx="7" cy="5" rx="5" ry="4" fill="#b6b4d0" stroke="#676591"/><path d="M4 3l4 1v4M9 2l2 3-2 3"/></svg>
    <time>16:40</time></div>
  <div class="ime"><b><i class="r">S</i><i class="o">o</i><i class="g">g</i><i class="o">o</i><i class="r">u</i></b><span>中</span>
    <svg viewBox="0 0 14 10"><path d="M11 1q1 7-9 7 8 3 10-2 1-3-1-5z" fill="#3e91dc" stroke="#3e91dc"/></svg>
    <svg viewBox="0 0 14 10"><ellipse cx="4" cy="3" rx="1.500" ry="1.500" stroke="#2b82d5"/><path d="M9 6h2l-1 3" stroke="#2b82d5"/></svg>
    <svg viewBox="0 0 14 10"><path d="M1 1h12v8H1z" fill="#dceeff" stroke="#3d91dd"/><path d="M3 3h8M3 5h8M4 7h6" stroke="#3d91dd" stroke-dasharray="2 1"/></svg>
    <svg viewBox="0 0 14 10"><path d="M2 5l3 2h6l2-2-2 4H4zM6 1h3v5H6z" fill="#555" stroke="#333"/></svg>
    <svg viewBox="0 0 14 10"><path d="M2 9l5-5M7 4V1l3-1-1 3 3 1-1 2H8z" fill="#448fd5" stroke="#347fc6" stroke-width="2"/></svg>
  </div>
</footer>
</body>
</html>
```
FILE: styles.css
```css
:root {
  --face: #b1acb1;
  --light: #d9d5d9;
  --dark: #858085;
}
* { box-sizing: border-box; }
html, body { height: 100%; }
body {
  margin: 0;
  display: flex;
  flex-direction: column;
  overflow: hidden;
  background: var(--face);
  color: #111;
  font: 9px/10px "DejaVu Sans", "Noto Sans CJK SC", sans-serif;
}
button {
  font: inherit;
  color: inherit;
  margin: 0;
  padding: 0;
  border: 0;
  background: none;
  white-space: nowrap;
}
svg { display: block; fill: none; stroke: #2b2b33; }
.defs { display: none; }

.title {
  flex: none;
  height: 13px;
  display: grid;
  grid-template-columns: 1fr auto 1fr;
  align-items: center;
  padding: 0 4px 0 1px;
  background: linear-gradient(90deg, #d5cfd6, #cbc5cc 65%, #aaa5ab);
  border-top: 1px solid #e8e4e8;
  border-bottom: 1px solid var(--dark);
}
.title h1 {
  margin: 0 36px 0 0;
  font-size: 9px;
  font-weight: normal;
}
.logo { width: 14px; height: 9px; stroke: none; }
.winbtns { display: flex; gap: 6px; justify-content: flex-end; }
.winbtns button {
  width: 11px;
  height: 8px;
  border: 1px solid #655;
  border-radius: 50%;
}
.min { background: radial-gradient(at 50% 20%, #fff0b0, #eca32c 50%, #b46c10); }
.max { background: radial-gradient(at 50% 20%, #d9f5b0, #57a92e 50%, #2e7416); }
.close { background: radial-gradient(at 50% 20%, #ffc8c0, #d24444 50%, #971c1c); }

.menu {
  flex: none;
  height: 15px;
  display: flex;
  align-items: center;
  gap: 10px;
  border-top: 1px solid var(--light);
  border-bottom: 1px solid var(--dark);
}
.menu .grip { margin-right: -3px; }
.menu u { text-underline-offset: 1px; }

.grip, .sep, .end, .gap { flex: none; align-self: stretch; }
.grip {
  width: 4px;
  margin: 1px 2px;
  border: solid var(--light);
  border-width: 0 1px;
  box-shadow: 1px 0 var(--dark);
}
.sep {
  width: 2px;
  margin: 1px 2px;
  background: linear-gradient(90deg, var(--dark) 50%, var(--light) 50%);
}
.gap { width: 9px; }
.end { width: 1px; margin-left: 9px; background: var(--light); }

.bar {
  flex: none;
  height: 14px;
  display: flex;
  align-items: center;
  border-top: 1px solid #c3bfc3;
}
.menu + .bar { height: 15px; }
.bar button {
  flex: none;
  width: 19px;
  height: 12px;
  display: grid;
  place-items: center;
}
.bar svg { width: 14px; height: 10px; }
.bar .drop { width: 9px; }
.bar .drop svg { width: 7px; color: #222; }
.bar .off svg { color: #8b878b; }
.bar .on {
  background: #dcd9dc;
  box-shadow: inset 1px 1px var(--dark), inset -1px -1px #fff;
}

main {
  flex: 1;
  min-height: 0;
  display: flex;
  border-top: 1px solid #757175;
}
.strip {
  flex: none;
  width: 23px;
  display: flex;
  flex-direction: column;
  align-items: center;
  border-left: 1px solid var(--light);
}
.strip:first-child { width: 26px; padding-right: 4px; }
.strip button {
  flex: none;
  height: 11px;
  display: grid;
  place-items: center;
}
.strip svg { width: 14px; height: 10px; }
.hgrip {
  flex: none;
  align-self: stretch;
  height: 3px;
  margin: 2px;
  border: solid var(--light);
  border-width: 1px 0;
  box-shadow: 0 1px var(--dark);
}
.hsep {
  flex: none;
  align-self: stretch;
  height: 2px;
  margin: 1px 1px 2px;
  background: linear-gradient(var(--dark) 50%, var(--light) 50%);
}
.stack { display: grid; grid-template-rows: repeat(14, 1fr); height: 161px; }
.stack button { height: auto; }
.foo { font: italic bold 9px/10px "Liberation Serif", serif; }
.letter { font: bold 12px/11px "Liberation Serif", serif; }

aside {
  flex: none;
  width: 150px;
  display: flex;
  flex-direction: column;
  padding: 1px 0 0 2px;
  border-left: 1px solid var(--dark);
  border-right: 1px solid var(--light);
}
.tree {
  margin: 0 2px 0 0;
  height: 84px;
  padding: 0 4px;
  list-style: none;
  background: #fff;
  border: 2px solid #555155;
  border-right-width: 1px;
  border-bottom-width: 1px;
}
.tree li {
  position: relative;
  display: flex;
  align-items: center;
  gap: 4px;
  height: 10px;
  padding-left: 16px;
}
.tree .root { padding: 0; gap: 3px; }
.tree svg { width: 13px; height: 9px; }
.tree li:not(.root)::before {
  content: "";
  position: absolute;
  left: 4px;
  top: -5px;
  width: 10px;
  height: 10px;
  border: dotted #999;
  border-width: 0 0 1px 1px;
}
.tree .more::after {
  content: "+";
  position: absolute;
  left: 1px;
  top: 2px;
  width: 7px;
  height: 7px;
  background: #fff;
  border: 1px solid #888;
  font-size: 7px;
  line-height: 5px;
  text-align: center;
}
.tabs { flex: none; height: 14px; display: flex; padding-right: 3px; }
.tab {
  display: flex;
  align-items: center;
  gap: 5px;
  padding: 0 5px;
  border-right: 1px solid #656165;
  border-bottom: 1px solid #656165;
}
.tab svg { width: 13px; height: 10px; }
.tab + .tab { flex: 1; gap: 6px; border-top: 1px solid #656165; border-right: 0; }
.scroll { display: flex; padding-top: 2px; }
.scroll button {
  width: 12px;
  height: 9px;
  border: 1px solid;
  border-color: #eee #555 #555 #eee;
}
.scroll svg { width: 10px; height: 7px; }
.props {
  flex: 1;
  display: flex;
  flex-direction: column;
  margin-top: 2px;
  border-top: 1px solid var(--light);
  box-shadow: inset 0 1px var(--dark);
}
.props label { height: 12px; line-height: 12px; margin-top: 1px; }
.props input {
  height: 11px;
  margin: 2px 3px 0 15px;
  padding: 0 1px;
  border: 1px solid #ddd;
  border-top-color: #555;
  border-left: 2px solid #555;
  border-radius: 0;
  background: #fff;
  color: #111;
  font: 8px/9px "DejaVu Sans", sans-serif;
  min-width: 0;
}

.view {
  flex: 1;
  min-width: 0;
  margin-left: 3px;
  background: #000;
}
.view svg { width: 100%; height: 100%; stroke: none; }

.bottom { height: 16px; border-top: 1px solid var(--light); }
.status {
  flex: none;
  height: 10px;
  display: grid;
  grid-template-columns: 370fr 215fr 85fr 170fr;
  background: #f7f5f7;
  border-top: 1px solid var(--dark);
}
.status span { line-height: 9px; border-right: 2px solid var(--dark); overflow: hidden; }
.status .s2, .status .s3 { text-align: center; color: #888; }
.status .s4 { padding-left: 1px; font-size: 8px; border: 0; }
.task {
  flex: none;
  position: relative;
  height: 12px;
  display: flex;
  align-items: center;
  background: linear-gradient(#b6b0b6, #cbc5cb);
}
.task svg { width: 13px; height: 10px; }
.apple { margin-left: 14px; }
.quick { display: flex; gap: 6px; margin-left: 24px; width: 71px; }
.chev { color: #555; }
.app {
  width: 132px;
  height: 12px;
  display: flex;
  align-items: center;
  gap: 3px;
  padding-left: 8px;
  background: #4038ab;
  color: #fff;
}
.task .app svg { height: 9px; }
.tray { margin-left: auto; display: flex; align-items: center; gap: 2px; padding-right: 10px; }
.tray .sg { margin-right: 26px; stroke: none; }
.tray time { font-size: 8px; margin-left: 4px; }
.ime {
  position: absolute;
  right: 1px;
  bottom: 11px;
  width: 134px;
  height: 12px;
  display: flex;
  align-items: center;
  justify-content: space-between;
  padding: 0 3px;
  background: #fff;
  border: 1px solid #d7d4e0;
}
.ime b { font: bold 10px/10px "DejaVu Sans", sans-serif; }
.ime i { font-style: normal; }
.ime span { color: #2b82d5; font-size: 11px; font-weight: bold; }
.r { color: #d92a2a; }
.o { color: #ee8a20; }
.g { color: #d0b820; }
```
